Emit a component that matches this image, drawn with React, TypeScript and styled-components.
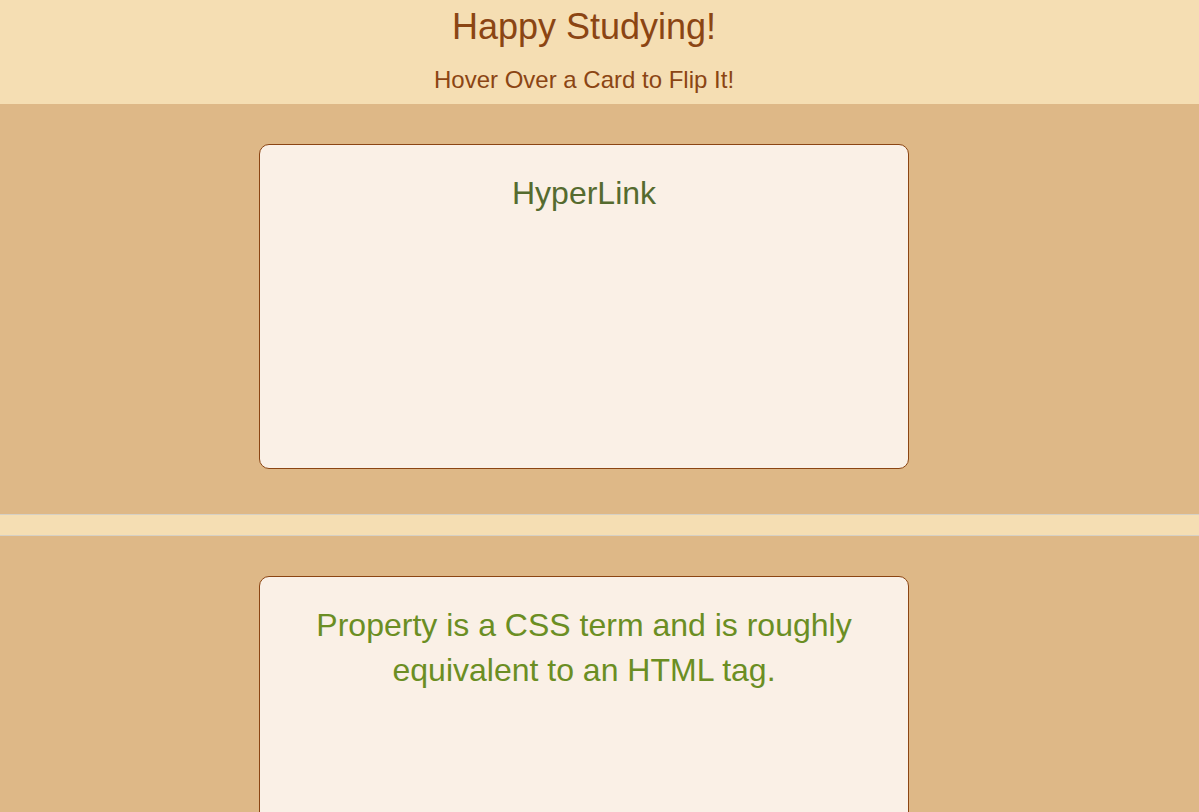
import React from "react";
import styled, { createGlobalStyle } from "styled-components";

const Global = createGlobalStyle`
  html, body { margin: 0; padding: 0; }
  body {
    font-family: "Liberation Sans", Arial, sans-serif;
    background: #deb887;
  }
`;

const Header = styled.header`
  background: #f5deb3;
  height: 104px;
  box-sizing: border-box;
  padding: 6px 31px 0 0;
  text-align: center;
  color: #8b4513;
`;

const Title = styled.h1`
  margin: 0;
  font-size: 36px;
  font-weight: normal;
  line-height: 42px;
`;

const Subtitle = styled.h2`
  margin: 18px 0 0;
  font-size: 24px;
  font-weight: normal;
  line-height: 28px;
`;

const Section = styled.section`
  background: #deb887;
  padding: 40px 31px 45px 0;
  display: flex;
  justify-content: center;
`;

const Divider = styled.div`
  height: 20px;
  background: #f5deb3;
  border-top: 1px solid #d6d0c4;
  border-bottom: 1px solid #d6d0c4;
`;

const Card = styled.div`
  width: 650px;
  height: 325px;
  box-sizing: border-box;
  background: #faf0e6;
  border: 1px solid #8b4513;
  border-radius: 10px;
  padding: 26px 40px 0;
  text-align: center;
`;

const CardText = styled.p<{ $back?: boolean }>`
  margin: 0;
  font-size: 32px;
  line-height: 45px;
  color: ${(p) => (p.$back ? "#6b8e23" : "#556b2f")};
`;

export default function App() {
  return (
    <>
      <Global />
      <Header>
        <Title>Happy Studying!</Title>
        <Subtitle>Hover Over a Card to Flip It!</Subtitle>
      </Header>
      <Section>
        <Card>
          <CardText>HyperLink</CardText>
        </Card>
      </Section>
      <Divider />
      <Section>
        <Card>
          <CardText $back>
            Property is a CSS term and is roughly equivalent to an HTML tag.
          </CardText>
        </Card>
      </Section>
    </>
  );
}
